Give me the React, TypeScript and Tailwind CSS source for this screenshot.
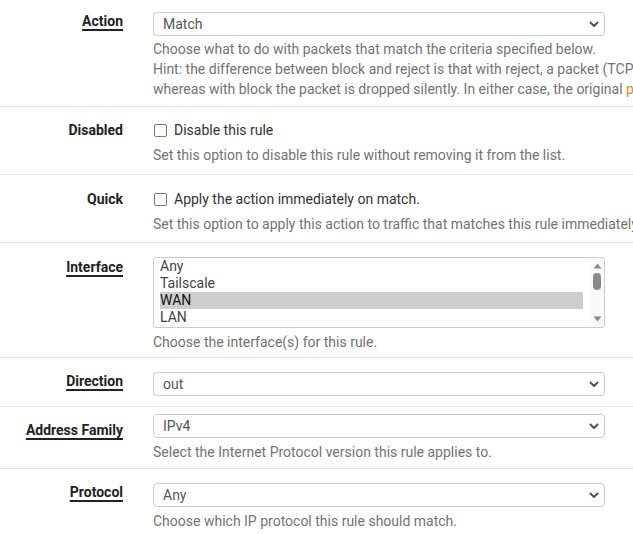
import React from 'react'

const Chevron = () => (
  <svg width="10" height="7" viewBox="0 0 10 7" className="shrink-0">
    <polyline points="1.5,1.5 5,5 8.5,1.5" fill="none" stroke="#555" strokeWidth="2" strokeLinecap="round" strokeLinejoin="round" />
  </svg>
)

const Select: React.FC<{ value: string }> = ({ value }) => (
  <div className="w-[452px] h-[24px] border border-[#cccccc] rounded-[4px] bg-white flex items-center justify-between pl-[9px] pr-[5px] text-[#555] text-[14px]">
    <span>{value}</span>
    <Chevron />
  </div>
)

const Help: React.FC<{ children: React.ReactNode; className?: string }> = ({ children, className = '' }) => (
  <div className={`text-[#737373] text-[14px] leading-[20px] whitespace-nowrap ${className}`}>{children}</div>
)

const Label: React.FC<{ text: string; required?: boolean; className?: string }> = ({ text, required, className = '' }) => (
  <div className={`w-[123px] shrink-0 text-right font-bold text-[14px] leading-[20px] text-[#222] ${className}`}>
    <span className={required ? 'underline decoration-[1.5px] underline-offset-[3px]' : ''}>{text}</span>
  </div>
)

const Checkbox: React.FC<{ label: string }> = ({ label }) => (
  <label className="flex items-center h-[20px] text-[14px] text-[#333]">
    <span className="ml-[1px] w-[13px] h-[13px] border border-[#767676] rounded-[2px] bg-white" />
    <span className="ml-[7px]">{label}</span>
  </label>
)

export default function App() {
  const ifaces = ['Any', 'Tailscale', 'WAN', 'LAN']
  return (
    <div className="w-[633px] h-[534px] overflow-hidden bg-white" style={{ fontFamily: 'Roboto, "Liberation Sans", sans-serif' }}>
      {/* Action */}
      <div className="flex pt-[12px] pb-[7px] border-b border-[#e3e3e3]">
        <Label text="Action" required className="-mt-[1px]" />
        <div className="ml-[30px]">
          <Select value="Match" />
          <Help className="mt-[3px]">
            <div>Choose what to do with packets that match the criteria specified below.</div>
            <div>Hint: the difference between block and reject is that with reject, a packet (TCP RST or ICMP port unreachable for UDP) is returned to the sender,</div>
            <div>
              whereas with block the packet is dropped silently. In either case, the original{' '}
              <span className="text-[#e0893a]">packet is discarded.</span>
            </div>
          </Help>
        </div>
      </div>

      {/* Disabled */}
      <div className="flex pt-[13px] pb-[9px] border-b border-[#e3e3e3]">
        <Label text="Disabled" />
        <div className="ml-[30px]">
          <Checkbox label="Disable this rule" />
          <Help className="mt-[5px]">Set this option to disable this rule without removing it from the list.</Help>
        </div>
      </div>

      {/* Quick */}
      <div className="flex pt-[14px] pb-[8px] border-b border-[#e3e3e3]">
        <Label text="Quick" />
        <div className="ml-[30px]">
          <Checkbox label="Apply the action immediately on match." />
          <Help className="mt-[5px]">Set this option to apply this action to traffic that matches this rule immediately.</Help>
        </div>
      </div>

      {/* Interface */}
      <div className="flex pt-[14px] pb-[5px] border-b border-[#e3e3e3]">
        <Label text="Interface" required />
        <div className="ml-[30px]">
          <div className="w-[452px] h-[71px] border border-[#cccccc] rounded-[3px] bg-white flex">
            <div className="flex-1 pl-[6px] pr-[8px]">
              {ifaces.map((n) => (
                <div
                  key={n}
                  className={`h-[17px] leading-[17px] text-[14px] ${n === 'WAN' ? 'bg-[#cecece] text-[#111]' : 'text-[#444]'}`}
                >
                  {n}
                </div>
              ))}
            </div>
            <div className="w-[12px] mr-[1px] bg-[#fafafa] flex flex-col items-center pt-[5px]">
              <svg width="9" height="6" viewBox="0 0 9 6">
                <polygon points="4.5,0.5 8.5,5.5 0.5,5.5" fill="#8a8a8a" />
              </svg>
              <div className="mt-[4px] w-[8px] h-[17px] rounded-[4px] bg-[#8a8a8a]" />
              <div className="flex-1" />
              <svg width="9" height="6" viewBox="0 0 9 6" className="mb-[5px]">
                <polygon points="0.5,0.5 8.5,0.5 4.5,5.5" fill="#8a8a8a" />
              </svg>
            </div>
          </div>
          <Help className="mt-[4px]">Choose the interface(s) for this rule.</Help>
        </div>
      </div>

      {/* Direction */}
      <div className="flex pt-[14px] pb-[10px] border-b border-[#e3e3e3]">
        <Label text="Direction" required className="mt-[-1px]" />
        <div className="ml-[30px]">
          <Select value="out" />
        </div>
      </div>

      {/* Address Family */}
      <div className="flex pt-[7px] pb-[6px] border-b border-[#e3e3e3]">
        <Label text="Address Family" required className="mt-[6px]" />
        <div className="ml-[30px]">
          <Select value="IPv4" />
          <Help className="mt-[4px]">Select the Internet Protocol version this rule applies to.</Help>
        </div>
      </div>

      {/* Protocol */}
      <div className="flex pt-[14px] pb-[5px]">
        <Label text="Protocol" required className="mt-[-1px]" />
        <div className="ml-[30px]">
          <Select value="Any" />
          <Help className="mt-[4px]">Choose which IP protocol this rule should match.</Help>
        </div>
      </div>
    </div>
  )
}
